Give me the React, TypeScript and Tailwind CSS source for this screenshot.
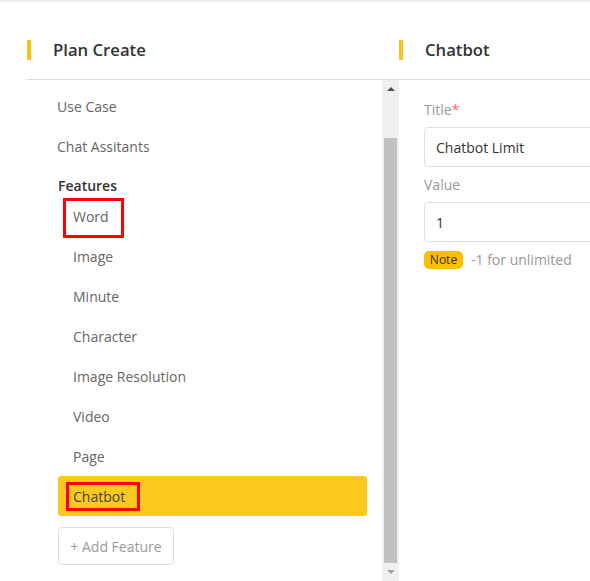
import React from "react";

const subItems = ["Word", "Image", "Minute", "Character", "Image Resolution", "Video", "Page", "Chatbot"];

export default function App() {
  return (
    <div
      className="w-[590px] h-[581px] overflow-hidden bg-white relative"
      style={{ fontFamily: '"Open Sans", "Noto Sans", sans-serif' }}
    >
      <div className="h-[2px] bg-[#efefef]" />
      <div className="pl-[27px]">
        {/* Header */}
        <div className="flex h-[78px] pt-[19px] border-b border-[#dcdcdc]">
          <div className="w-[372px] shrink-0 flex items-center">
            <div className="w-[4px] h-[20px] bg-[#f9c41a]" />
            <div className="ml-[22px] text-[16.7px] font-semibold text-[#333]">Plan Create</div>
          </div>
          <div className="flex items-center">
            <div className="w-[4px] h-[20px] bg-[#f9c41a]" />
            <div className="ml-[22px] text-[16.7px] font-semibold text-[#333]">Chatbot</div>
          </div>
        </div>
        {/* Body */}
        <div className="flex h-[520px]">
          <div className="w-[355px] shrink-0 pt-[6px] text-[14px] text-[#666]">
            <div className="pl-[30px] h-[40px] flex items-center">Use Case</div>
            <div className="pl-[30px] h-[40px] flex items-center">Chat Assitants</div>
            <div className="pl-[31px] pt-[10px] leading-5 font-semibold text-[#333]">Features</div>
            <div className="ml-[31px] w-[309px]">
              {subItems.map((s) => {
                const active = s === "Chatbot";
                return (
                  <div
                    key={s}
                    className={
                      "relative h-[40px] flex items-center pl-[15px] rounded-[3px] " +
                      (active ? "bg-[#fbc91c] text-[#444]" : "")
                    }
                  >
                    {s}
                    {s === "Word" && (
                      <div className="absolute left-[5px] top-[2px] w-[61px] h-[40px] border-[3px] border-[#f00]" />
                    )}
                    {s === "Chatbot" && (
                      <div className="absolute left-[8px] top-[6px] w-[74px] h-[29px] border-[3px] border-[#f00]" />
                    )}
                  </div>
                );
              })}
              <button className="mt-[11px] w-[116px] h-[38px] border border-[#dcdcdc] rounded-[4px] text-[14px] text-[#999] bg-white">
                + Add Feature
              </button>
            </div>
          </div>
          {/* Scrollbar */}
          <div className="w-[17px] shrink-0 bg-[#f0f0f0] flex flex-col items-center">
            <div className="h-[16px] flex items-center justify-center pt-[1px]">
              <div className="w-0 h-0 border-l-[4px] border-r-[4px] border-b-[4px] border-l-transparent border-r-transparent border-b-[#505050]" />
            </div>
            <div className="mt-[42px] w-[13px] h-[425px] bg-[#c1c1c1]" />
            <div className="h-[17px] flex items-center justify-center">
              <div className="w-0 h-0 border-l-[4px] border-r-[4px] border-t-[4px] border-l-transparent border-r-transparent border-t-[#a3a3a3]" />
            </div>
          </div>
          {/* Right form */}
          <div className="pl-[25px] pt-[20px] text-[14px] shrink-0">
            <div className="leading-5 text-[#999]">
              Title<span className="text-[#f56c6c]">*</span>
            </div>
            <div className="mt-[7px] w-[320px] h-[40px] border border-[#dcdfe6] rounded-[4px] flex items-center pl-[11px] text-[#333]">
              Chatbot Limit
            </div>
            <div className="mt-[8px] leading-5 text-[#999]">Value</div>
            <div className="mt-[7px] w-[320px] h-[40px] border border-[#dcdfe6] rounded-[4px] flex items-center pl-[11px] text-[#333]">
              1
            </div>
            <div className="mt-[7px] flex items-center">
              <span className="h-[18px] w-[39px] rounded-[5px] bg-[#fbbd08] text-[12px] text-[#333] flex items-center justify-center">
                Note
              </span>
              <span className="ml-[8px] text-[#999]">-1 for unlimited</span>
            </div>
          </div>
        </div>
      </div>
    </div>
  );
}
